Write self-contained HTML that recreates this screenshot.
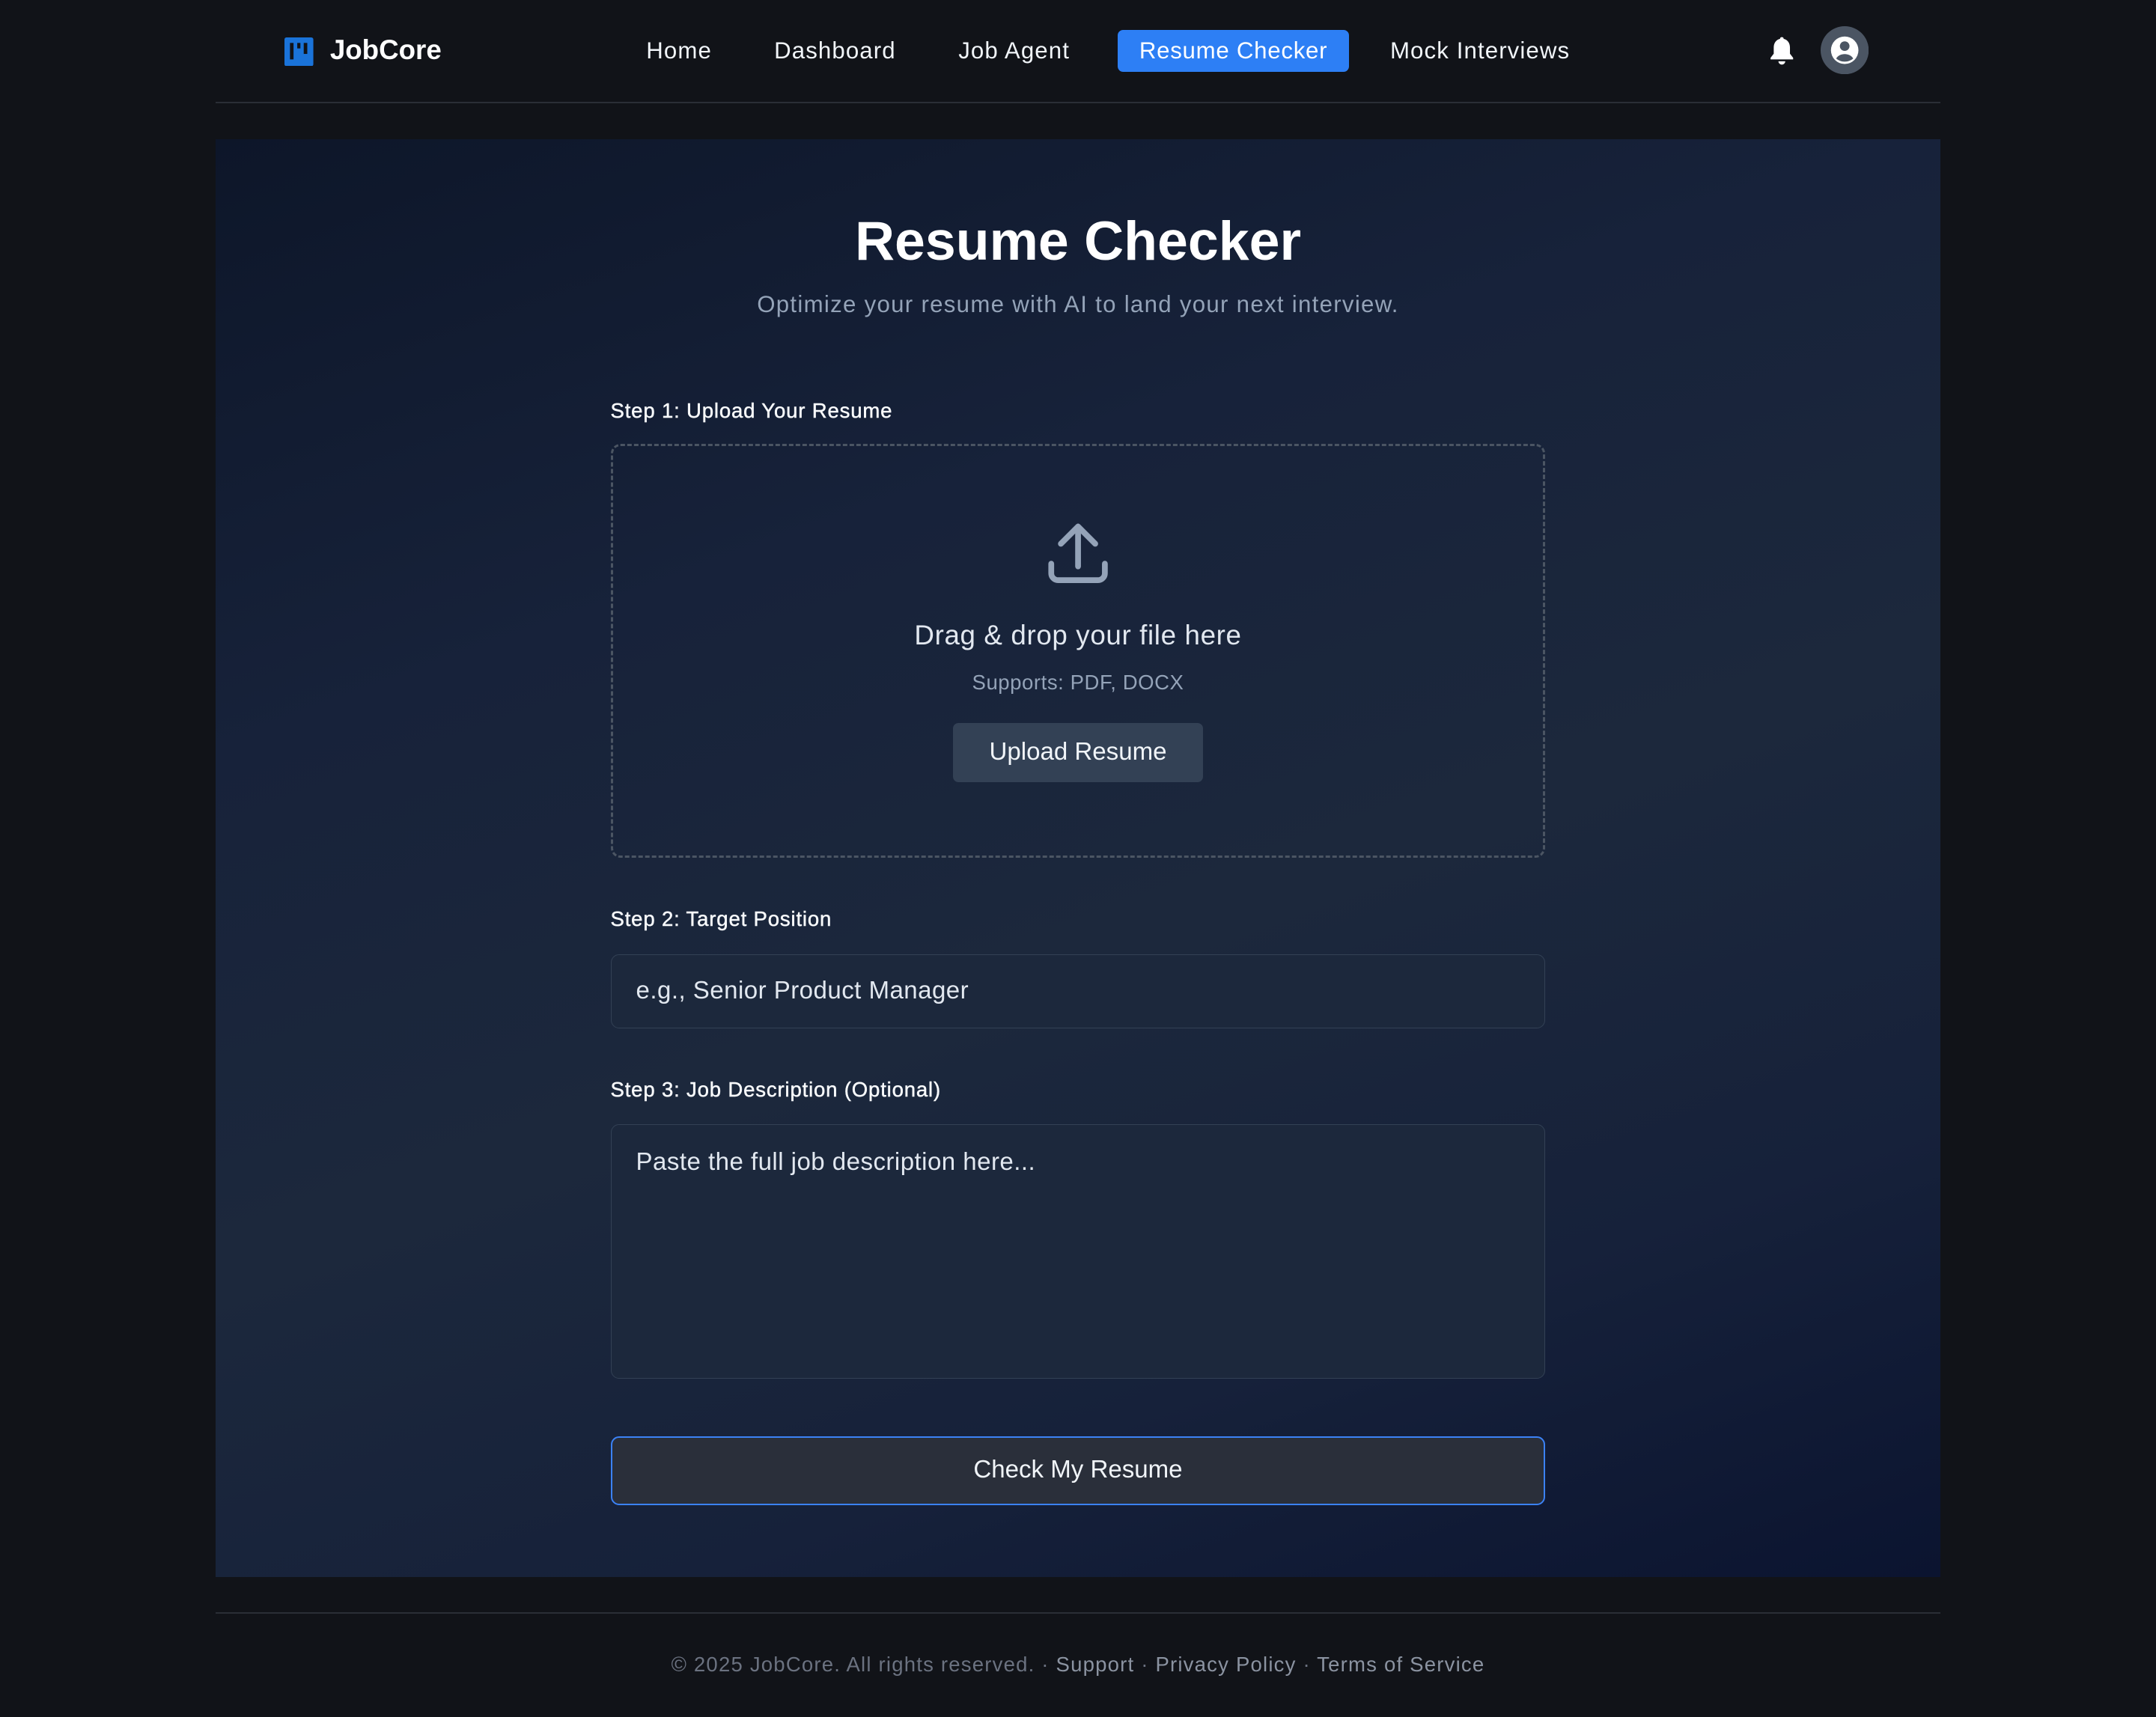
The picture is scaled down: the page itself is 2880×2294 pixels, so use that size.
<!DOCTYPE html>
<html><head><meta charset="utf-8">
<style>
*{box-sizing:border-box;margin:0;padding:0}
html,body{background:#111318;}
body{zoom:1.83674;width:1568px;height:1249px;overflow:hidden;position:relative;font-family:"Liberation Sans",Arial,sans-serif;color:#fff}
.abs{position:absolute}
.nav{position:absolute;top:27px;font-size:17px;color:#f1f5f9;line-height:20px;letter-spacing:0.6px}
.lbl{position:absolute;left:444px;font-size:15px;color:#f8fafc;letter-spacing:0.45px;-webkit-text-stroke:0.25px #f8fafc}
.field{position:absolute;left:444px;width:680px;background:#1c283c;border:1px solid #334155;border-radius:6px;font-size:18px;color:#e2e8f0;padding-left:18px;letter-spacing:0.25px}
</style></head><body>
<!-- header -->
<svg class="abs" style="left:207px;top:27px" width="21" height="21" viewBox="0 0 21 21"><rect width="21" height="21" rx="1.5" fill="#1a73d9"/><rect x="4" y="4" width="2.6" height="12" fill="#111318"/><rect x="9.3" y="4" width="2.3" height="4" fill="#111318"/><rect x="14" y="4" width="2.6" height="8" fill="#111318"/></svg>
<div class="abs" style="left:240px;top:25px;font-size:20px;font-weight:bold;color:#fff">JobCore</div>
<div class="nav" style="left:470px">Home</div>
<div class="nav" style="left:563px">Dashboard</div>
<div class="nav" style="left:697px">Job Agent</div>
<div class="abs" style="left:813px;top:22px;width:168px;height:30px;background:#2d7ff5;border-radius:4px;font-size:17px;color:#fff;text-align:center;line-height:30px;letter-spacing:0.4px">Resume Checker</div>
<div class="nav" style="left:1011px">Mock Interviews</div>
<svg class="abs" style="left:1285px;top:25px" width="22" height="24" viewBox="0 0 22 24"><path d="M11 2c1 0 1.3.6 1.3 1.2 3 .7 4.6 3.2 4.6 6.3v4.5l2.3 3v1.2H2.8V17l2.3-3V9.5c0-3.1 1.6-5.6 4.6-6.3C9.7 2.6 10 2 11 2z" fill="#fff"/><path d="M8.5 19.5h5a2.5 2.5 0 0 1-5 0z" fill="#fff"/></svg>
<svg class="abs" style="left:1324px;top:19px" width="35" height="35" viewBox="0 0 35 35"><circle cx="17.5" cy="17.5" r="17.5" fill="#4b5563"/><circle cx="17.5" cy="17.5" r="10" fill="#fff"/><circle cx="17.5" cy="14.5" r="3.5" fill="#4b5563"/><path d="M11.3 23.5c1.5-2.3 3.8-3.2 6.2-3.2s4.7.9 6.2 3.2c-1.7 1.5-3.8 2.3-6.2 2.3s-4.5-.8-6.2-2.3z" fill="#4b5563"/></svg>
<div class="abs" style="left:157px;top:74px;width:1254px;height:1px;background:#2a2e36"></div>
<!-- main -->
<div class="abs" style="left:157px;top:101px;width:1254px;height:1046px;background:linear-gradient(160deg,#0d1629 0%,#17223a 30%,#1c283c 55%,#16213a 78%,#0b1430 100%)"></div>
<div class="abs" style="left:0;width:1568px;top:152px;text-align:center;font-size:40px;font-weight:bold;color:#fff">Resume Checker</div>
<div class="abs" style="left:0;width:1568px;top:212px;text-align:center;font-size:17px;color:#94a3b8;letter-spacing:0.7px">Optimize your resume with AI to land your next interview.</div>
<div class="lbl" style="top:290px">Step 1: Upload Your Resume</div>
<div class="abs" style="left:444px;top:323px;width:680px;height:301px;border:2px dashed #4b5563;border-radius:7px"></div>
<svg class="abs" style="left:760px;top:380px" width="48" height="48" viewBox="0 0 48 48"><path d="M24 3v29M11.5 15.5L24 3l12.5 12.5M4.5 30v7a5 5 0 0 0 5 5h29a5 5 0 0 0 5-5v-7" fill="none" stroke="#94a3b8" stroke-width="4.2" stroke-linecap="round" stroke-linejoin="round"/></svg>
<div class="abs" style="left:0;width:1568px;top:451px;text-align:center;font-size:20px;color:#e2e8f0;letter-spacing:0.35px">Drag &amp; drop your file here</div>
<div class="abs" style="left:0;width:1568px;top:488px;text-align:center;font-size:15px;color:#94a3b8;letter-spacing:0.3px">Supports: PDF, DOCX</div>
<div class="abs" style="left:693px;top:526px;width:182px;height:43px;background:#334155;border-radius:4px;text-align:center;line-height:43px;font-size:18px;color:#f1f5f9">Upload Resume</div>
<div class="lbl" style="top:660px">Step 2: Target Position</div>
<div class="field" style="top:694px;height:54px;line-height:52px">e.g., Senior Product Manager</div>
<div class="lbl" style="top:784px">Step 3: Job Description (Optional)</div>
<div class="field" style="top:818px;height:185px;padding-top:16px;line-height:22px">Paste the full job description here...</div>
<div class="abs" style="left:444px;top:1045px;width:680px;height:50px;background:#2a2f3a;border:1.5px solid #3b82f6;border-radius:6px;text-align:center;line-height:47px;font-size:18px;color:#f1f5f9">Check My Resume</div>
<!-- footer -->
<div class="abs" style="left:157px;top:1173px;width:1254px;height:1px;background:#2a2e36"></div>
<div class="abs" style="left:0;width:1568px;top:1202px;text-align:center;font-size:15px;color:#6b7280;letter-spacing:0.65px">© 2025 JobCore. All rights reserved. · <span style="color:#8b93a1">Support</span> · <span style="color:#8b93a1">Privacy Policy</span> · <span style="color:#8b93a1">Terms of Service</span></div>
</body></html>
